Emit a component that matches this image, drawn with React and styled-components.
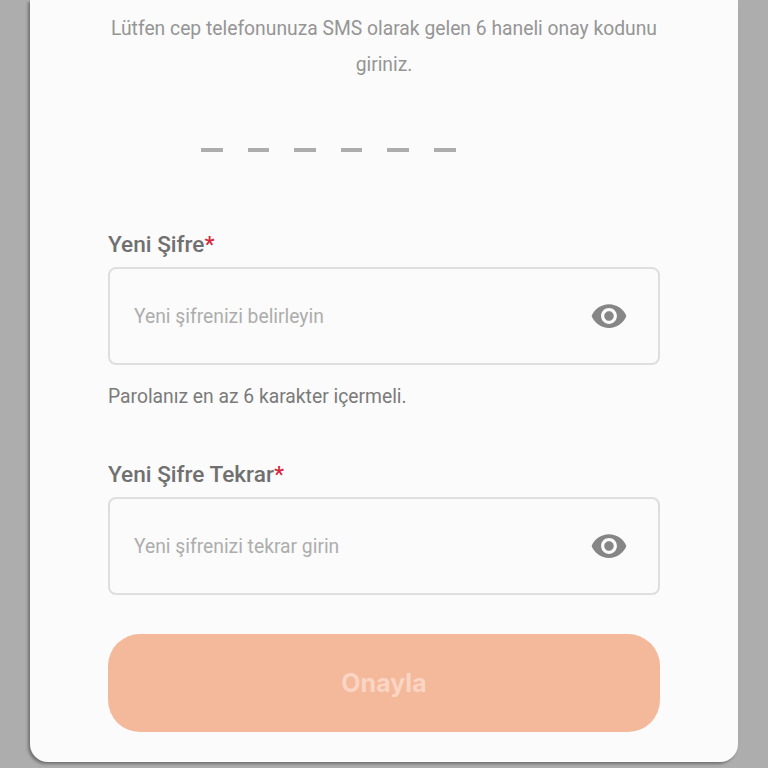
import React from "react"
import styled, { createGlobalStyle } from "styled-components"
import { MdVisibility } from "react-icons/md"

const GlobalStyle = createGlobalStyle`
  html, body {
    margin: 0;
    padding: 0;
    height: 768px;
    overflow: hidden;
    background: #adadad;
    font-family: Roboto, "Liberation Sans", sans-serif;
  }
`

const Page = styled.div`
  height: 768px;
  padding: 0 30px 6px;
  box-sizing: border-box;
`

const Card = styled.div`
  height: 762px;
  box-sizing: border-box;
  padding: 11px 78px 0;
  background: #fbfbfb;
  border-radius: 0 0 18px 18px;
  box-shadow: -2px 2px 3px rgba(0, 0, 0, 0.35);
`

const Intro = styled.p`
  margin: 0;
  font-size: 19.3px;
  line-height: 35.5px;
  color: #959595;
  text-align: center;
`

const CodeRow = styled.div`
  display: flex;
  gap: 25px;
  padding-left: 93px;
  margin-top: 66px;
`

const Dash = styled.span`
  width: 21.6px;
  height: 4px;
  background: #adadad;
`

const Field = styled.div`
  margin-top: ${p => p.$top}px;
`

const Label = styled.label`
  display: block;
  font-size: 22.6px;
  line-height: 24px;
  font-weight: 500;
  color: #707070;
`

const Star = styled.span`
  color: #d5283c;
`

const InputBox = styled.div`
  display: flex;
  align-items: center;
  justify-content: space-between;
  height: 98px;
  margin-top: 10px;
  padding: 0 33px 0 24px;
  box-sizing: border-box;
  border: 2px solid #dedede;
  border-radius: 8px;
`

const Placeholder = styled.span`
  font-size: 19.3px;
  color: #adadad;
`

const Eye = styled(MdVisibility)`
  font-size: 38px;
  color: #868686;
  margin-right: -3px;
`

const Hint = styled.p`
  margin: 21px 0 0;
  font-size: 19.3px;
  line-height: 22px;
  color: #7a7a7a;
`

const Submit = styled.button`
  display: block;
  width: 100%;
  height: 98px;
  margin-top: 39px;
  border: 0;
  border-radius: 32px;
  background: #f4b89b;
  color: #fad5c3;
  font-family: Inter, sans-serif;
  font-size: 25px;
  font-weight: 700;
`

export default function App() {
  return (
    <Page>
      <GlobalStyle />
      <Card>
        <Intro>Lütfen cep telefonunuza SMS olarak gelen 6 haneli onay kodunu giriniz.</Intro>
        <CodeRow>
          {[0, 1, 2, 3, 4, 5].map(i => (
            <Dash key={i} />
          ))}
        </CodeRow>
        <Field $top={81}>
          <Label>
            Yeni Şifre<Star>*</Star>
          </Label>
          <InputBox>
            <Placeholder>Yeni şifrenizi belirleyin</Placeholder>
            <Eye />
          </InputBox>
        </Field>
        <Hint>Parolanız en az 6 karakter içermeli.</Hint>
        <Field $top={55}>
          <Label>
            Yeni Şifre Tekrar<Star>*</Star>
          </Label>
          <InputBox>
            <Placeholder>Yeni şifrenizi tekrar girin</Placeholder>
            <Eye />
          </InputBox>
        </Field>
        <Submit>Onayla</Submit>
      </Card>
    </Page>
  )
}
